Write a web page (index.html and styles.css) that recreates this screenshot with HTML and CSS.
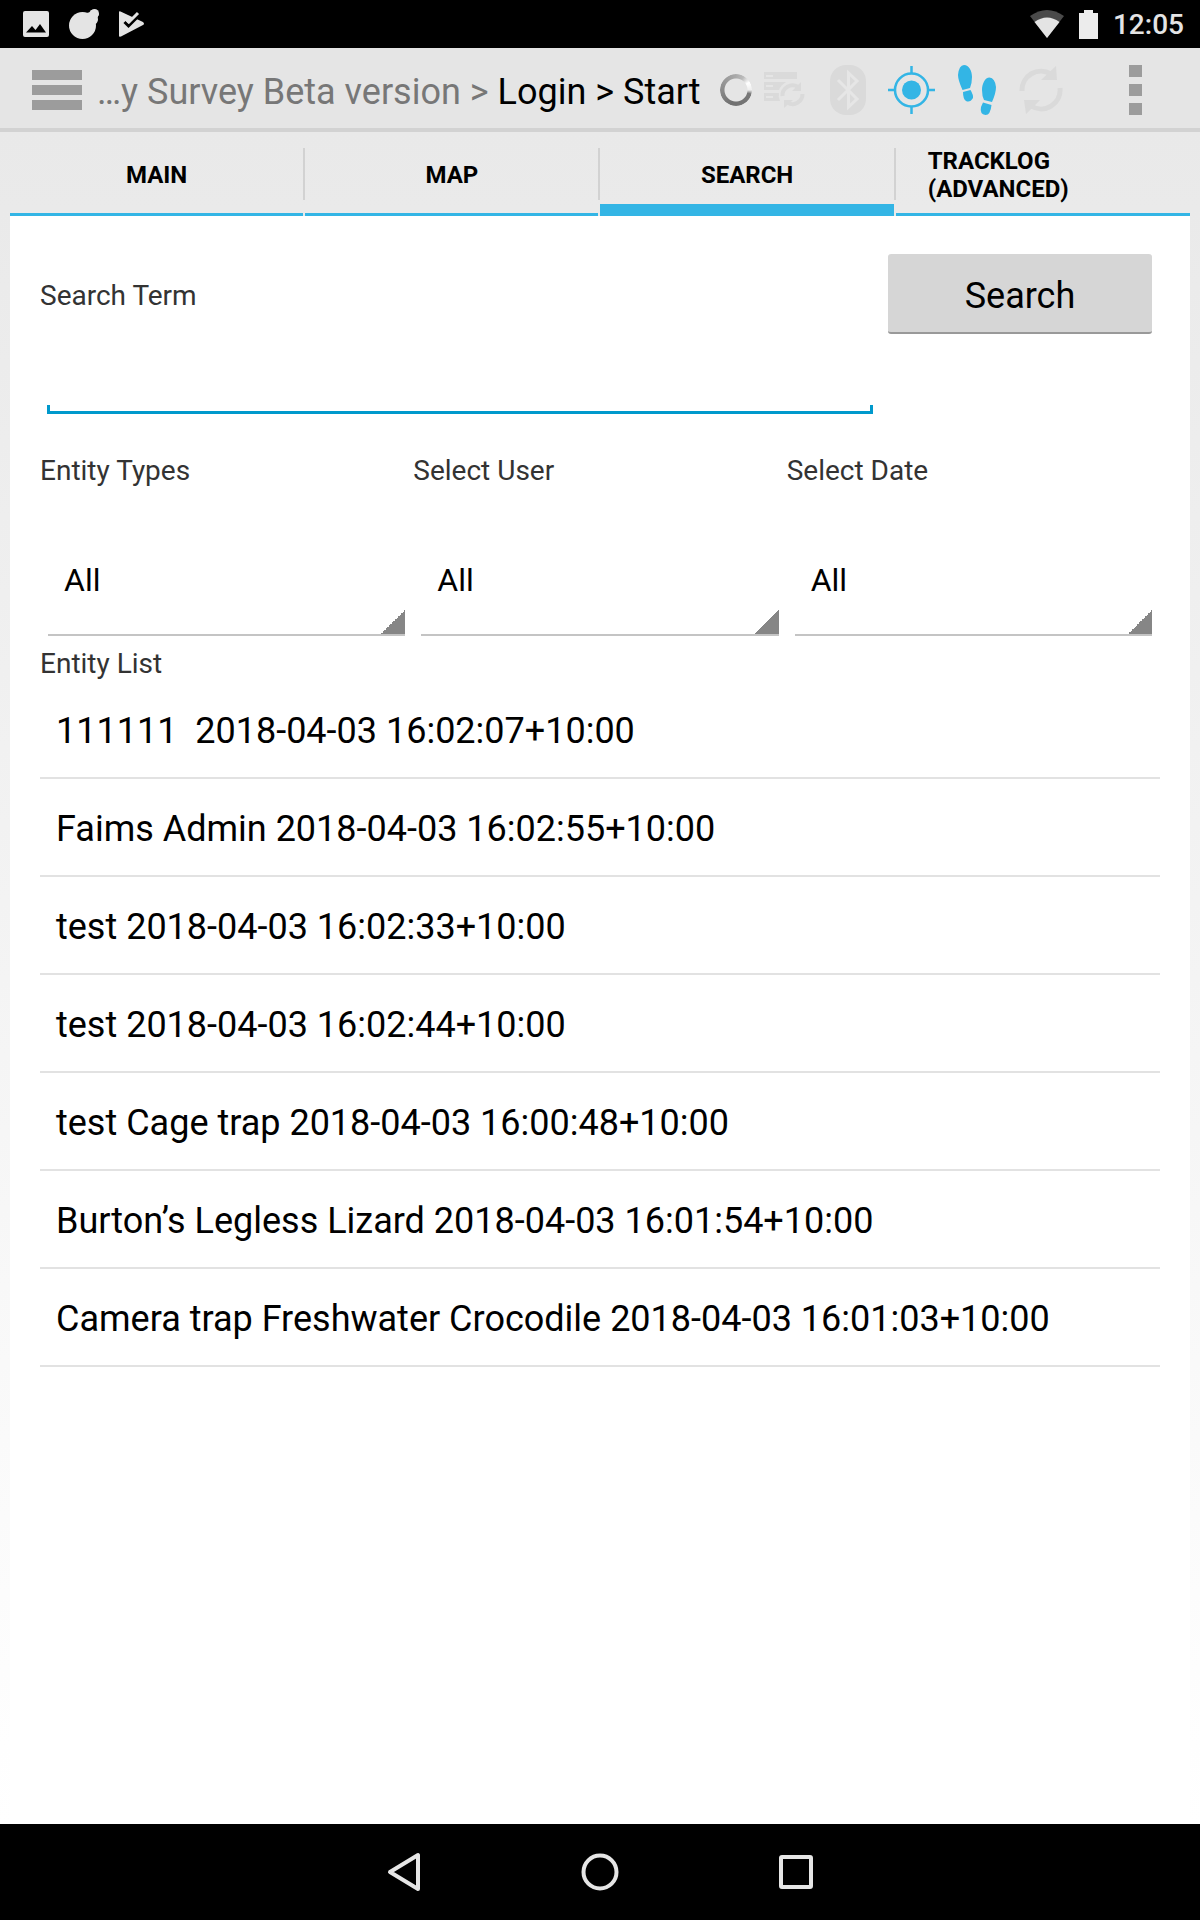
FILE: index.html
```html
<!DOCTYPE html>
<html lang="en">
<head>
<meta charset="utf-8">
<meta name="viewport" content="width=device-width, initial-scale=1">
<title>Survey Beta version</title>
<link rel="stylesheet" href="styles.css">
</head>
<body>
<div class="status-bar">
  <div class="status-group notifications">
    <svg width="26" height="26" viewBox="0 0 26 26"><path fill="#e4e4e4" fill-rule="evenodd" d="M2 0h22a2 2 0 0 1 2 2v22a2 2 0 0 1-2 2H2a2 2 0 0 1-2-2V2a2 2 0 0 1 2-2zM3 21.500h20l-6-8.500-4.500 6-3.500-4z"/></svg>
    <svg width="30" height="30" viewBox="0 0 30 30" fill="#e4e4e4"><circle cx="13.500" cy="16.500" r="13.500"/><circle cx="25.500" cy="4.500" r="4.500"/><path d="M17 4q4 0 5-3l8 4q-2 3-1 6-1 4-3 4z"/></svg>
    <svg width="25" height="26" viewBox="0 0 25 26"><path fill="#e4e4e4" d="M0 1Q0 0 1.500.5L24 11q2 2 0 3L2 25.500Q0 26 0 25z"/><path fill="none" stroke="#000" stroke-width="3" d="M5.500 11l4 4L22 2.500"/><path fill="none" stroke="#e4e4e4" stroke-width="3" d="M6 7l4 4 9-9"/></svg>
  </div>
  <div class="status-group">
    <svg width="34" height="28" viewBox="0 0 34 28"><path fill="#4a4a4a" d="M0 6Q17-6 34 6L17 28z"/><path fill="#e4e4e4" d="M4.500 12Q17 3 29.500 12L17 28z"/></svg>
    <svg width="19" height="29" viewBox="0 0 19 29"><path fill="#ececec" d="M5 0h9v3h5v26H0V3h5z"/></svg>
    <time>12:05</time>
  </div>
</div>

<header class="action-bar">
  <button class="icon-button" aria-label="Menu"><svg width="50" height="40" viewBox="0 0 50 40"><path fill="#9c9c9c" d="M0 0h50v10H0zM0 15h50v10H0zM0 30h50v10H0z"/></svg></button>
  <nav class="crumbs" aria-label="Breadcrumb"><a class="crumb-old" href="#">…y Survey Beta version &gt;</a> <a href="#">Login &gt;</a> <a href="#">Start</a></nav>
  <div class="spinner" role="progressbar" aria-label="Loading"></div>
  <div class="actions">
    <button class="icon-button" aria-label="Sync records"><svg width="44" height="50" viewBox="0 0 44 50"><path fill="#dadada" fill-rule="evenodd" d="M0 7h33v7H0zM2 10v2h7v-2zM0 17h22q-5 3-7 8H0zM2 20v2h7v-2zM0 28h15q-1 4 1 8H0zM2 31v2h7v-2z"/><path fill="none" stroke="#dadada" stroke-width="4" d="M18.500 31A10 10 0 0 1 34 22M38.500 29A10 10 0 0 1 24 38"/><path fill="#dadada" d="M37 17v9h-9zM20 35v8l9-8z"/></svg></button>
    <button class="icon-button" aria-label="Bluetooth"><svg width="36" height="50" viewBox="0 0 36 50"><rect width="36" height="50" rx="16" fill="#dadada"/><path fill="none" stroke="#e6e6e6" stroke-width="3" d="M8 15l19 19-8.500 8V8l8.500 8L8 35"/></svg></button>
    <button class="icon-button" aria-label="Location"><svg width="47" height="48" viewBox="0 0 47 48"><circle cx="23.500" cy="24" r="9.500" fill="#33b5e5"/><g fill="none" stroke="#33b5e5" stroke-width="2.500"><circle cx="23.500" cy="24" r="16.500"/><path d="M23.500 0v7M23.500 41v7M0 24h7M40 24h7"/></g></svg></button>
    <button class="icon-button" aria-label="Track log"><svg width="40" height="52" viewBox="0 0 40 52" fill="#33b5e5"><path d="M7 1C12 1 15 7 15 13q0 6-2 11l-7.500 2Q1 16 1 11 2 1 7 1zM6 28l7.500-2q3 5 2.500 8-3 5-7 3-3-2-3-9zM32.500 13.500C28 13.500 25 20 25 26q0 6 2 10l8 2q4-9 4-15-1-9-6.500-9.500zM26 38.500l8.500 2.500q-1 10-6 10-6-1-4.500-8z"/></svg></button>
    <button class="icon-button" aria-label="Refresh"><svg width="44" height="50" viewBox="0 0 44 50"><path fill="none" stroke="#dadada" stroke-width="5" d="M3 26A19 19 0 0 1 32 9M41 23A19 19 0 0 1 12 41"/><path fill="#dadada" d="M37 1l1 14H22zM5 35l2 14 14-14z"/></svg></button>
  </div>
  <button class="icon-button overflow" aria-label="More options"><svg width="13" height="50" viewBox="0 0 13 50"><path fill="#9c9c9c" d="M0 0h13v12H0zM0 19h13v12H0zM0 38h13v12H0z"/></svg></button>
</header>

<main class="page">
  <nav class="tabs" aria-label="Sections">
    <a class="tab" href="#">MAIN</a>
    <a class="tab" href="#">MAP</a>
    <a class="tab active" href="#" aria-current="page">SEARCH</a>
    <a class="tab wide" href="#">TRACKLOG (ADVANCED)</a>
  </nav>

  <div class="panel">
    <form class="search-row">
      <div class="term">
        <label for="term">Search Term</label>
        <input id="term" type="text">
      </div>
      <button class="search-button" type="button">Search</button>
    </form>

    <div class="filters">
      <div class="filter"><label for="types">Entity Types</label><select id="types"><option>All</option></select></div>
      <div class="filter"><label for="user">Select User</label><select id="user"><option>All</option></select></div>
      <div class="filter"><label for="date">Select Date</label><select id="date"><option>All</option></select></div>
    </div>

    <h2 class="list-title">Entity List</h2>
    <ul class="entities">
      <li>111111&nbsp; 2018-04-03 16:02:07+10:00</li>
      <li>Faims Admin 2018-04-03 16:02:55+10:00</li>
      <li>test 2018-04-03 16:02:33+10:00</li>
      <li>test 2018-04-03 16:02:44+10:00</li>
      <li>test Cage trap 2018-04-03 16:00:48+10:00</li>
      <li>Burton’s Legless Lizard 2018-04-03 16:01:54+10:00</li>
      <li>Camera trap Freshwater Crocodile 2018-04-03 16:01:03+10:00</li>
    </ul>
  </div>
</main>

<footer class="nav-bar">
  <button class="icon-button" aria-label="Back"><svg width="40" height="40" viewBox="0 0 40 40"><path fill="none" stroke="#e6e6e6" stroke-width="4" stroke-linejoin="round" d="M34 3v34L6 20z"/></svg></button>
  <button class="icon-button" aria-label="Home"><svg width="40" height="40" viewBox="0 0 40 40"><circle cx="20" cy="20" r="16.500" fill="none" stroke="#e6e6e6" stroke-width="4"/></svg></button>
  <button class="icon-button" aria-label="Recent apps"><svg width="40" height="40" viewBox="0 0 40 40"><rect x="5" y="5" width="30" height="30" rx="1" fill="none" stroke="#e6e6e6" stroke-width="4"/></svg></button>
</footer>
</body>
</html>
```
FILE: styles.css
```css
* {
  box-sizing: border-box;
}

body {
  display: flex;
  flex-direction: column;
  min-height: 100vh;
  margin: 0;
  background: #fff;
  color: #000;
  font-family: Roboto, sans-serif;
  font-size: 36px;
}

svg {
  display: block;
}

a {
  color: inherit;
  text-decoration: none;
}

.icon-button {
  flex: none;
  padding: 0;
  border: 0;
  background: none;
}

.status-bar {
  display: flex;
  justify-content: space-between;
  align-items: center;
  height: 48px;
  padding: 0 16px 0 23px;
  background: #000;
  color: #e4e4e4;
}

.status-group {
  display: flex;
  align-items: center;
  gap: 15px;
}

.notifications {
  gap: 20px;
}

.status-bar time {
  padding-top: 2px;
  font-size: 28px;
  font-weight: 500;
  line-height: 46px;
}

.action-bar {
  display: flex;
  align-items: center;
  height: 84px;
  padding: 4px 58px 0 32px;
  border-bottom: 4px solid #d2d2d2;
  background: #e5e5e5;
}

.crumbs {
  margin-left: 15px;
  padding-top: 4px;
  line-height: 44px;
  white-space: nowrap;
}

.crumb-old {
  color: #777;
}

.spinner {
  flex: none;
  width: 32px;
  height: 32px;
  margin-left: 19px;
  border-radius: 50%;
  background: conic-gradient(#aaa, #bbb 30deg, #fff 60deg, #eee 90deg, #777 105deg, #707070 200deg, #8a8a8a 270deg, #aaa);
  mask: radial-gradient(circle, transparent 11px, #000 12px);
}

.actions {
  display: flex;
  align-items: center;
  gap: 22px;
  margin-left: 12px;
}

.overflow {
  margin-left: auto;
}

.page {
  display: flex;
  flex: 1;
  flex-direction: column;
  padding: 0 10px;
  background: linear-gradient(#e9e9e9, #fff);
}

.tabs {
  display: grid;
  grid-template-columns: repeat(3, 293fr) 294fr;
  gap: 2px;
  height: 84px;
  font-size: 24px;
  font-weight: 700;
  line-height: 28px;
}

.tab {
  position: relative;
  display: flex;
  align-items: center;
  justify-content: center;
  padding: 4px 32px 0;
  border-bottom: 3px solid #33b5e5;
}

.tab.wide {
  justify-content: flex-start;
  padding-right: 100px;
}

.tab.active {
  padding-top: 13px;
  border-bottom-width: 12px;
}

.tab + .tab::before {
  position: absolute;
  top: 16px;
  left: -2px;
  width: 2px;
  height: 52px;
  background: #d2d2d2;
  content: "";
}

.panel {
  flex: 1;
  padding: 30px;
  background: #fff;
}

label,
.list-title {
  display: block;
  margin: 0;
  color: #333;
  font-size: 28px;
  font-weight: 400;
  line-height: 34px;
}

.search-row {
  display: grid;
  grid-template-columns: 840fr 280fr;
  align-items: start;
}

.term {
  padding-top: 33px;
}

.term input {
  display: block;
  width: calc(100% - 14px);
  height: 72px;
  margin: 29px 7px 0;
  padding: 0 16px;
  border: 0;
  outline: 0;
  background:
    linear-gradient(#0099cc, #0099cc) left bottom / 3px 9px no-repeat,
    linear-gradient(#0099cc, #0099cc) right bottom / 3px 9px no-repeat,
    linear-gradient(#0099cc, #0099cc) left bottom / 100% 3px no-repeat;
  font: inherit;
  font-size: 32px;
}

.search-button {
  height: 80px;
  margin: 8px 8px 0;
  padding: 6px 0 0;
  border: 0;
  border-bottom: 2px solid #999;
  border-radius: 3px;
  background: #d6d6d6;
  color: #000;
  font: inherit;
}

.filters {
  display: grid;
  grid-template-columns: repeat(3, 1fr);
  margin-top: 40px;
}

.filter select {
  display: block;
  width: calc(100% - 16px);
  height: 96px;
  margin: 52px 8px 0;
  padding: 0 16px 14px;
  border: 0;
  border-bottom: 2px solid #c4c4c4;
  border-radius: 0;
  outline: 0;
  background: linear-gradient(135deg, transparent 50%, #868686 50%) right bottom / 24px 24px no-repeat;
  color: #000;
  font: inherit;
  font-size: 32px;
  appearance: none;
}

.list-title {
  margin-top: 11px;
}

.entities {
  margin: 0;
  padding: 0;
  list-style: none;
}

.entities li {
  padding: 28px 16px 24px;
  border-bottom: 2px solid #e2e2e2;
  line-height: 44px;
}

.nav-bar {
  display: flex;
  align-items: center;
  justify-content: center;
  gap: 156px;
  height: 96px;
  background: #000;
}
```
